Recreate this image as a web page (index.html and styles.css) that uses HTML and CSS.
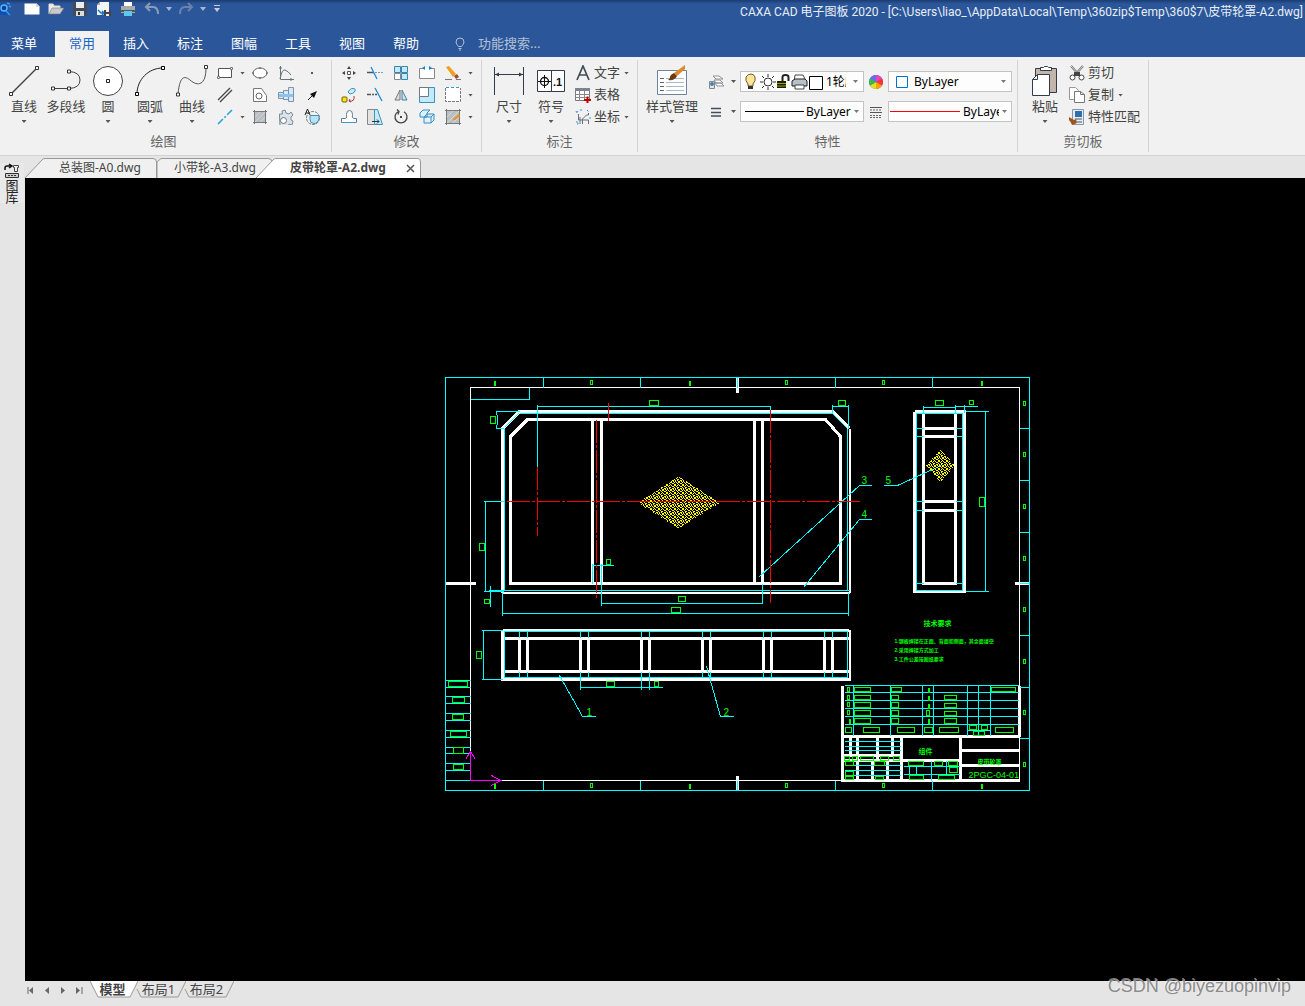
FILE: index.html
```html
<!DOCTYPE html>
<html lang="zh-CN">
<head>
<meta charset="utf-8">
<title>CAXA CAD 电子图板 2020</title>
<link rel="stylesheet" href="styles.css">
</head>
<body>
<div class="app">
<header class="header">
  <div class="titlebar">
    <div class="quick">
      <svg class="logo" width="12" height="16" viewBox="0 0 12 16"><path d="M0 3q4-2 6 1t2 6l3 4-3-1q-4 2-8 0" fill="#0b4fb4"/><circle cx="4" cy="7" r="3" fill="#123f87" stroke="#55b4ff" stroke-width="1.5"/><path d="M7 2l3 1M9 5l2 1M6 10l4 4" stroke="#2d9bff" stroke-width="1.5"/></svg>
      <button aria-label="新建"><svg width="16" height="16" viewBox="0 0 16 16"><path d="M.5 2.5h12l3 3v8H.5z" fill="#fff"/><path d="M12 2v4h4" fill="#cfd6e2"/></svg></button>
      <button aria-label="打开"><svg width="16" height="16" viewBox="0 0 16 16"><path d="M1 13V3h4l1 2h6v3" fill="#eee" stroke="#ddd"/><path d="M1 13l3-6h12l-4 6z" fill="#c9c9c9" stroke="#777" stroke-width=".6"/></svg></button>
      <button aria-label="保存"><svg width="16" height="16" viewBox="0 0 16 16"><path d="M1 1h14v14H3l-2-2z" fill="#444b55"/><path d="M4 1h8v6H4z" fill="#e9edf2"/><path d="M4 10h8v5H4z" fill="#ddd"/><path d="M6 11h2v3H6z" fill="#333"/></svg></button>
      <button aria-label="另存为"><svg width="16" height="16" viewBox="0 0 16 16"><path d="M4 1h9v13H1V4z" fill="#f4f4f4"/><path d="M4 1v3H1" fill="#aaa"/><path d="M2 9l3 3h3M6 10l2 2-2 2" fill="none" stroke="#1979ca" stroke-width="1.5"/><path d="M8 9h7v6H8z" fill="#444"/><path d="M10 9h3v2h-3zM10 13h3v2h-3z" fill="#eee"/></svg></button>
      <button aria-label="打印"><svg width="16" height="16" viewBox="0 0 16 16"><path d="M4 1h8v5H4z" fill="#fff"/><path d="M1 5h14v7H1z" fill="#a9a9a9"/><path d="M1 9h14v2H1z" fill="#555"/><path d="M4 10h8v5H4z" fill="#5cc8f0"/></svg></button>
      <button aria-label="撤销"><svg width="16" height="16" viewBox="0 0 16 16"><path d="M6 2L2 6l4 4M2 6h7q5 0 5 7" fill="none" stroke="#8a9bb8" stroke-width="2"/></svg></button>
      <button aria-label="撤销列表" class="arrow-btn"><svg width="6" height="4" viewBox="0 0 6 4"><path d="M0 0h6L3 4z" fill="#a9b6cd"/></svg></button>
      <button aria-label="重做"><svg width="16" height="16" viewBox="0 0 16 16"><path d="M10 2l4 4-4 4M14 6H7q-5 0-5 7" fill="none" stroke="#6a82ab" stroke-width="2"/></svg></button>
      <button aria-label="重做列表" class="arrow-btn"><svg width="6" height="4" viewBox="0 0 6 4"><path d="M0 0h6L3 4z" fill="#a9b6cd"/></svg></button>
      <button aria-label="自定义工具栏" class="arrow-btn"><svg width="6" height="8" viewBox="0 0 6 8"><path d="M0 0h6v1H0zM0 3h6L3 7z" fill="#c4cddd"/></svg></button>
    </div>
    <h1>CAXA CAD 电子图板 2020 - [C:\Users\liao_\AppData\Local\Temp\360zip$Temp\360$7\皮带轮罩-A2.dwg]</h1>
  </div>
  <nav class="menu">
    <button class="file">菜单</button>
    <button class="active">常用</button>
    <button>插入</button>
    <button>标注</button>
    <button>图幅</button>
    <button>工具</button>
    <button>视图</button>
    <button>帮助</button>
    <label class="search"><svg width="10" height="14" viewBox="0 0 10 14"><path d="M3.500 9.500Q1 7 1 5a4 4 0 0 1 8 0q0 2-2.500 4.500zM3.500 11.500h3M4 13h2" fill="none" stroke="#b4c0d5"/></svg><input type="text" placeholder="功能搜索..." aria-label="功能搜索"></label>
  </nav>
</header>

<section class="ribbon">
  <div class="group draw">
    <div class="tools">
      <button class="big"><svg width="32" height="32" viewBox="0 0 32 32"><path d="M3 29L29 3" stroke="#444" stroke-width="1.500"/><path d="M1.500 27.500h3v3h-3zM27.500 1.500h3v3h-3z" fill="#fff" stroke="#333"/></svg><span>直线</span><i class="caret"></i></button>
      <button class="big"><svg width="32" height="32" viewBox="0 0 32 32"><path d="M2 23.500h17Q30 23 30 15T19 6.500" fill="none" stroke="#444"/><path d="M1.500 22h3v3h-3zM17.500 22h3v3h-3zM17.500 5h3v3h-3z" fill="#fff" stroke="#333"/></svg><span>多段线</span></button>
      <button class="big"><svg width="32" height="32" viewBox="0 0 32 32"><circle cx="16" cy="16" r="14.500" fill="#fff" stroke="#444"/><path d="M14.500 14.500h3v3h-3z" fill="#fff" stroke="#222"/></svg><span>圆</span><i class="caret"></i></button>
      <button class="big"><svg width="32" height="32" viewBox="0 0 32 32"><path d="M3 29C3 15 14 3 29 3" fill="none" stroke="#222"/><path d="M1.500 27.500h3v3h-3zM27.500 1.500h3v3h-3z" fill="#fff" stroke="#000"/></svg><span>圆弧</span><i class="caret"></i></button>
      <button class="big"><svg width="32" height="32" viewBox="0 0 32 32"><path d="M2 29C4 8 10 12 14 15C22 22 30 20 30 3" fill="none" stroke="#555"/><path d="M.500 28h3v3h-3zM28.500 .500h3v3h-3z" fill="#fff" stroke="#333"/></svg><span>曲线</span><i class="caret"></i></button>
      <div class="small-grid">
        <button class="split" aria-label="矩形"><svg width="16" height="16" viewBox="0 0 16 16"><path d="M1.500 3.500h13v9h-13z" fill="#fff" stroke="#555"/><path d="M.500 11.500h2v2h-2zM13.500 2.500h2v2h-2z" fill="#fff" stroke="#777"/></svg><i class="caret"></i></button>
        <button aria-label="椭圆"><svg width="16" height="16" viewBox="0 0 16 16"><ellipse cx="8" cy="8" rx="7" ry="5" fill="#fff" stroke="#666"/><path d="M0 8h2M14 8h2M8 2v2M8 12v2" stroke="#555"/></svg></button>
        <button aria-label="公式曲线"><svg width="16" height="16" viewBox="0 0 16 16"><path d="M2.500 1v13.500H16M2 14Q4 4 7 5t6 5M1 3h3M13 13v3" fill="none" stroke="#68727d"/></svg></button>
        <button aria-label="点"><svg width="16" height="16" viewBox="0 0 16 16"><path d="M7 7h2v2H7z" fill="#555"/></svg></button>
        <button class="split" aria-label="平行线"><svg width="16" height="16" viewBox="0 0 16 16"><path d="M1 13L13 1M3 15L15 3" stroke="#444" stroke-width="1.300"/></svg></button>
        <button aria-label="孔"><svg width="16" height="16" viewBox="0 0 16 16"><path d="M1.500 1.500h8l5 7v6h-13z" fill="#fff" stroke="#777"/><circle cx="7" cy="9" r="3" fill="#fff" stroke="#666"/></svg></button>
        <button aria-label="轴"><svg width="16" height="16" viewBox="0 0 16 16"><path d="M.500 5.500h5v6h-5zM5.500 3.500h5v9h-5zM10.500 .500h5v14h-5z" fill="#d9e9f7" stroke="#7b93ab"/><path d="M1 7h14v3H1z" fill="#8cc1ec"/></svg></button>
        <button aria-label="箭头"><svg width="16" height="16" viewBox="0 0 16 16"><path d="M4 13l6-6" stroke="#222"/><path d="M13 4l-7 3 4 4z" fill="#111"/></svg></button>
        <button class="split" aria-label="中心线"><svg width="16" height="16" viewBox="0 0 16 16"><path d="M1 15L15 1" stroke="#1ba4e6" stroke-width="1.500" stroke-dasharray="7 2 2 2"/></svg><i class="caret"></i></button>
        <button aria-label="填充"><svg width="16" height="16" viewBox="0 0 16 16"><path d="M3 3h10v10H3z" fill="#b9bec2"/><path d="M3 8l5-5M3 13L13 3M8 13l5-5" stroke="#d3d3d3"/><path d="M1 2.500h14M1 13.500h14M2.500 1v14M13.500 1v14" stroke="#70777d"/></svg></button>
        <button aria-label="齿轮"><svg width="16" height="16" viewBox="0 0 16 16"><path d="M1.500 8V5h3L4 2l3-1 1 3 3 1 2-2 2 3-2 2v3l2 1-1 4-3-1-1 2H2z" fill="#dae3ea" stroke="#7b8b99"/><circle cx="5.500" cy="11.500" r="3" fill="#fff" stroke="#687682"/></svg></button>
        <button aria-label="局部放大"><svg width="16" height="16" viewBox="0 0 16 16"><circle cx="9" cy="9" r="6.500" fill="none" stroke="#777" stroke-dasharray="3 1"/><path d="M6 6.500h9v3q-1 5-5 5-4 0-4-4z" fill="#b5e4fa" stroke="#4a8fae"/><path d="M1 6L3.500 0 6 6M2 4h3" fill="none" stroke="#222"/></svg></button>
      </div>
    </div>
    <h2>绘图</h2>
  </div>

  <div class="group modify">
    <div class="tools">
      <div class="small-grid">
        <button aria-label="平移"><svg width="16" height="16" viewBox="0 0 16 16"><path d="M6.500 6.500h3v3h-3z" fill="#fff" stroke="#555"/><path d="M8 1l2 3H6zM8 15l2-3H6zM1 8l3-2v4zM15 8l-3-2v4z" fill="#444"/></svg></button>
        <button aria-label="裁剪"><svg width="16" height="16" viewBox="0 0 16 16"><path d="M0 7.500h7" stroke="#555" stroke-width="1.500"/><path d="M4 2l6 12" stroke="#168bd3" stroke-width="1.300"/><path d="M8 7.500h8" stroke="#6f9fc8" stroke-dasharray="2 1"/></svg></button>
        <button aria-label="阵列"><svg width="16" height="16" viewBox="0 0 16 16"><path d="M1.500 1.500h6v6h-6zM8.500 1.500h6v6h-6zM8.500 8.500h6v6h-6z" fill="#bfeaff" stroke="#3e83aa"/><path d="M1.500 8.500h6v6h-6z" fill="#fff" stroke="#888"/></svg></button>
        <button aria-label="拉伸"><svg width="16" height="16" viewBox="0 0 16 16"><path d="M5 3.500H.500v10h15v-10H11" fill="#fff" stroke="#888"/><path d="M3 3l3-2v4zM13 3l-3-2v4z" fill="#1684cf"/></svg></button>
        <button class="split" aria-label="删除"><svg width="16" height="16" viewBox="0 0 16 16"><path d="M1 2l3-1 7 8-3 3z" fill="#f0a01c"/><path d="M9 11l3-2 2 3-3 2z" fill="#a34b32"/><path d="M0 14.500h7M11 14.500h5" stroke="#777"/></svg><i class="caret"></i></button>
        <button aria-label="复制选择"><svg width="16" height="16" viewBox="0 0 16 16"><rect x="1" y="10" width="5" height="5" rx="1" fill="#ffe500" stroke="#6a6500"/><path d="M7 5q3-5 7-3 1 4-5 5z" fill="#c9edff" stroke="#3f91bd"/><path d="M8 14q6 1 5-5M9 12l-1 2 2 1" fill="none" stroke="#a33"/></svg></button>
        <button aria-label="延伸"><svg width="16" height="16" viewBox="0 0 16 16"><path d="M0 7.500h10" stroke="#555" stroke-width="1.500" stroke-dasharray="4 1 2 1"/><path d="M8 1l7 13" stroke="#168bd3" stroke-width="1.300"/></svg></button>
        <button aria-label="镜像"><svg width="16" height="16" viewBox="0 0 16 16"><path d="M7 3v10H2z" fill="#ddd" stroke="#777"/><path d="M9 3v10h5z" fill="#bce9ff" stroke="#527b92"/></svg></button>
        <button aria-label="缩放"><svg width="16" height="16" viewBox="0 0 16 16"><path d="M.500 .500h15v15H.500z" fill="#bfeaff" stroke="#3e91bd"/><path d="M.500 .500h9v9h-9z" fill="#fff" stroke="#777"/></svg></button>
        <button class="split" aria-label="打断"><svg width="16" height="16" viewBox="0 0 16 16"><path d="M.500 .500h15v14H.500z" fill="#fff"/><path d="M.500 1v13.500h15V1" fill="none" stroke="#777" stroke-dasharray="3 1"/><path d="M1 .500h14" stroke="#299bd5" stroke-dasharray="3 2"/></svg><i class="caret"></i></button>
        <button aria-label="等距线"><svg width="16" height="16" viewBox="0 0 16 16"><path d="M.500 9.500h4q2-1 1-4 0-4 3-4t3 4q-1 3 1 4h3v4H.500z" fill="#fff" stroke="#657b8a"/><path d="M1 13.500h14" stroke="#3c9ad0"/></svg></button>
        <button aria-label="拔模"><svg width="16" height="16" viewBox="0 0 16 16"><path d="M.500 .500h7v15h-7z" fill="#e3e3e3" stroke="#888"/><path d="M7.500 .500h3l5 15h-8z" fill="#bfeaff" stroke="#4492b4"/><path d="M5 12.500h7M10 10.500l2 2-2 2" fill="none" stroke="#333"/></svg></button>
        <button aria-label="旋转"><svg width="16" height="16" viewBox="0 0 16 16"><path d="M5 2.700A6 6 0 1 0 11 2.700M4 .500l2 2-1 3" fill="none" stroke="#444" stroke-width="1.300"/><path d="M7 7h2v2H7z" fill="#444"/></svg></button>
        <button aria-label="分解"><svg width="16" height="16" viewBox="0 0 16 16"><path d="M1 4l3-3h7l-3 3v4H1zM5 8l3-3h7v6l-3 3H5zM12 14V8H5M12 8l3-3" fill="#d7f1ff" stroke="#3a8ec0"/></svg></button>
        <button class="split" aria-label="编辑填充"><svg width="16" height="16" viewBox="0 0 16 16"><path d="M2 2h12v12H2z" fill="#b9bec2"/><path d="M2 8l6-6M2 14L14 2M8 14l6-6" stroke="#d8d8d8"/><path d="M0 1.500h16M0 14.500h16M1.500 0v16M14.500 0v16" stroke="#777"/><path d="M8 11l1-2 5-4 1 2-5 4z" fill="#e7961a"/></svg><i class="caret"></i></button>
      </div>
    </div>
    <h2>修改</h2>
  </div>

  <div class="group notes">
    <div class="tools">
      <button class="big"><svg width="32" height="32" viewBox="0 0 32 32"><path d="M1.500 2v28M30.500 2v28M2 9.500h28" stroke="#333c48"/><path d="M2 9.500l4-2v4zM30 9.500l-4-2v4z" fill="#333c48"/></svg><span>尺寸</span><i class="caret"></i></button>
      <button class="big"><svg width="32" height="32" viewBox="0 0 32 32"><path d="M2.500 5.500h27v21h-27zM16.500 5v22" fill="#fff" stroke="#333c48"/><circle cx="9.500" cy="16.500" r="4" fill="none" stroke="#111" stroke-width="1.300"/><path d="M3 16.500h13M9.500 10v13" stroke="#111"/><text x="18" y="21" class="glyph">.1</text></svg><span>符号</span><i class="caret"></i></button>
      <div class="list">
        <button><svg width="16" height="16" viewBox="0 0 16 16"><path d="M2 15L8 1l6 14M4 10h8" fill="none" stroke="#444c57" stroke-width="1.700"/></svg><span>文字</span><i class="caret"></i></button>
        <button><svg width="16" height="16" viewBox="0 0 16 16"><path d="M.500 2.500h14v11H.500z" fill="#fff" stroke="#777"/><path d="M0 1h15v3H0z" fill="#7b8490"/><path d="M0 7.500h15M0 10.500h15M4.500 4v10M9.500 4v10" stroke="#888"/><path d="M9 13h7M12.500 9.500v7" stroke="#b00" stroke-width="2"/></svg><span>表格</span></button>
        <button><svg width="16" height="16" viewBox="0 0 16 16"><path d="M3.500 5v6h10v4M7.500 15v-5l4-4h2V4M5 15V8" fill="none" stroke="#64707d"/><path d="M1 2l1 2 1-2M5 1h2M12 1l2 2M1 13h2v2H1M14 9h2" stroke="#3794d7" fill="none" stroke-dasharray="2 1"/></svg><span>坐标</span><i class="caret"></i></button>
      </div>
    </div>
    <h2>标注</h2>
  </div>

  <div class="group props">
    <div class="tools">
      <button class="big wide"><svg width="32" height="32" viewBox="0 0 32 32"><path d="M1.500 5.500h29v24h-29z" fill="#fff" stroke="#6f849c"/><path d="M4 13.500h4M4 17.500h4M4 21.500h4M4 25.500h4" stroke="#54677c"/><path d="M10 13.500h18M10 17.500h18M10 21.500h18M10 25.500h18" stroke="#aab7c4"/><path d="M29 0v4l-8 7-3-3z" fill="#dc8a2c"/><path d="M18 8l3 3q-2 5-9 4 2-1 2-3t4-4z" fill="#6c3c16"/></svg><span>样式管理</span><i class="caret"></i></button>
      <div class="prop-grid">
        <button class="split" aria-label="图层"><svg width="16" height="16" viewBox="0 0 16 16"><path d="M5 2h6l4 3H8zM6 6h6l3 3H8zM7 9h6l3 3H9z" fill="#fff" stroke="#8a929b"/><path d="M1.500 7.500h5v7h-5z" fill="#dce8f5" stroke="#888"/><circle cx="4" cy="10" r="2" fill="#4a7ebb"/></svg><i class="caret"></i></button>
        <div class="combo layer">
          <svg width="78" height="18" viewBox="0 0 78 18"><path d="M3 11Q0 8 1 4q2-3 5-3t4 3q1 4-2 7v2H3z" fill="#ffe59a" stroke="#685b32"/><path d="M3 13h5v3H3z" fill="#333"/><circle cx="23" cy="9" r="4" fill="#fff" stroke="#333"/><path d="M23 1v3M23 14v3M15 9h3M28 9h3M17 3l2 2M27 13l2 2M29 3l-2 2M19 13l-2 2" stroke="#333"/><path d="M32 8h9v7h-9z" fill="#1d1d00"/><path d="M32 10.500h9M32 13h9" stroke="#9ca500"/><path d="M37.500 8V4q0-2 3-2t3 2v4" fill="none" stroke="#222" stroke-width="2"/><path d="M50 2h8l2 4v3H49z" fill="#fff" stroke="#444"/><path d="M47 8l3-2h10l2 2v5H47z" fill="#b9c0c6" stroke="#222"/><path d="M50 12h9v4h-9z" fill="#fff" stroke="#444"/><path d="M64.500 3.500h13v13h-13z" fill="#fff" stroke="#000"/></svg>
          <select aria-label="当前图层"><option>1轮廓实线层</option></select><i class="caret"></i>
        </div>
        <svg class="mid" width="14" height="14" viewBox="0 0 14 14"><circle cx="7" cy="7" r="7" fill="#3779e5"/><path d="M7 7V0a7 7 0 0 1 6 3.500z" fill="#e943b8"/><path d="M7 7l6-3.500a7 7 0 0 1 0 7z" fill="#f33"/><path d="M7 7l6 3.500a7 7 0 0 1-6 3.500z" fill="#f8a000"/><path d="M7 7v7a7 7 0 0 1-6-3.500z" fill="#e8df1b"/><path d="M7 7l-6 3.500a7 7 0 0 1 0-7z" fill="#35bb42"/><path d="M7 7L1 3.500A7 7 0 0 1 7 0z" fill="#6e68ed"/></svg>
        <div class="combo color"><svg width="12" height="12" viewBox="0 0 12 12"><path d="M.500 .500h11v11H.500z" fill="#fff" stroke="#0073cf"/></svg><select aria-label="颜色"><option>ByLayer</option></select><i class="caret"></i></div>
        <button class="split" aria-label="线型"><svg width="16" height="16" viewBox="0 0 16 16"><path d="M3 4.500h10M3 8.500h10M3 12h10" stroke="#444d59" stroke-width="1.300"/></svg><i class="caret"></i></button>
        <div class="combo line"><hr><select aria-label="线型样式"><option>ByLayer</option></select><i class="caret"></i></div>
        <svg class="mid" width="14" height="14" viewBox="0 0 14 14"><path d="M1 2.500h12M1 7.500h12" stroke="#555"/><path d="M1 5h12M1 10.500h12M1 12.500h12" stroke="#666" stroke-dasharray="2 1"/></svg>
        <div class="combo line red"><hr><select aria-label="线宽样式"><option>ByLayer</option></select><i class="caret"></i></div>
      </div>
    </div>
    <h2>特性</h2>
  </div>

  <div class="group clip">
    <div class="tools">
      <button class="big"><svg width="32" height="32" viewBox="0 0 32 32"><path d="M6.500 3.500h21v24h-21z" fill="#c2b5ab" stroke="#333c48"/><path d="M11.500 2.500h3l1-1h3l1 1h3v3h-11z" fill="#fff" stroke="#333c48"/><path d="M8.500 9.500h12v21h-17v-16z" fill="#fff" stroke="#333c48"/><path d="M8.500 9.500v5h-5" fill="none" stroke="#333c48"/></svg><span>粘贴</span><i class="caret"></i></button>
      <div class="list">
        <button><svg width="16" height="16" viewBox="0 0 16 16"><path d="M2 1l9 10M14 1L5 11" stroke="#666" stroke-width="2"/><path d="M2 1l8 9M14 1L6 10" stroke="#ddd"/><circle cx="3.500" cy="12.500" r="2.500" fill="#fff" stroke="#444"/><circle cx="12.500" cy="12.500" r="2.500" fill="#fff" stroke="#444"/><path d="M5 7h6v4H5z" fill="#444"/></svg><span>剪切</span></button>
        <button><svg width="16" height="16" viewBox="0 0 16 16"><path d="M.500 .500h6l3 3v9h-9z" fill="#fff" stroke="#999"/><path d="M5.500 4.500h6l4 3v8h-10z" fill="#fff" stroke="#777"/><path d="M11.500 4.500v3h4" fill="none" stroke="#777"/></svg><span>复制</span><i class="caret"></i></button>
        <button><svg width="16" height="16" viewBox="0 0 16 16"><path d="M3.500 .500h11v15h-11z" fill="#e6edf4" stroke="#8496aa"/><path d="M6 2h7v6H6z" fill="#2f6fae"/><path d="M6 10h7M8 13h5" stroke="#555"/><path d="M0 8l5 3 2-1 1 4-5 2q-1-3-3-5z" fill="#9d531a"/></svg><span>特性匹配</span></button>
      </div>
    </div>
    <h2>剪切板</h2>
  </div>
</section>

<main class="workspace">
  <aside class="dock"><button aria-label="图库"><svg width="16" height="16" viewBox="0 0 16 16"><path d="M1 7V5q0-2 2-2h4M5 1l3 2-3 2" fill="none" stroke="#111" stroke-width="1.500"/><path d="M9.500 2.500h5v2h-1v4h-3v-4h-1z" fill="#eee" stroke="#444"/><path d="M1.500 10.500h13v4h-13z" fill="#ccc" stroke="#333"/><path d="M4 12.500h8" stroke="#333" stroke-dasharray="2 1"/></svg><span>图库</span></button></aside>
  <div class="stage">
    <nav class="filetabs">
      <button class="t1"><svg width="132" height="20" viewBox="0 0 132 20"><path d="M0 20L17 2Q18 .500 20 .500H128Q131.500 .500 131.500 4V20" fill="#f0f0f0" stroke="#999"/></svg><span>总装图-A0.dwg</span></button>
      <button class="t2"><svg width="116" height="20" viewBox="0 0 116 20"><path d="M0 20V4L4 .500H111Q115 .500 115 4V20" fill="#f0f0f0" stroke="#999"/></svg><span>小带轮-A3.dwg</span></button>
      <button class="t3"><svg width="166" height="20" viewBox="0 0 166 20"><path d="M0 20L17 2Q18 .500 20 .500H162Q164.500 .500 164.500 4V20" fill="#fff" stroke="#999"/></svg><span>皮带轮罩-A2.dwg</span><svg class="x" width="9" height="9" viewBox="0 0 9 9"><path d="M1 1l7 7M8 1L1 8" stroke="#555" stroke-width="1.500"/></svg></button>
    </nav>
    <div class="canvas">
      <svg class="drawing" width="586" height="415" viewBox="444.500 376.500 586 415" role="img" aria-label="皮带轮罩图纸">
        <defs><pattern id="hatch" width="8" height="8" patternUnits="userSpaceOnUse" x=".5" y=".5"><path d="M0 0h1v1H0zM2 0h1v1H2zM5 0h2v1H5zM1 1h1v1H1zM3 1h1v1H3zM5 1h2v1H5zM0 2h1v1H0zM4 2h1v1H4zM7 2h1v1H7zM1 3h2v1H1zM5 3h1v1H5zM1 4h2v1H1zM4 4h1v1H4zM6 4h1v1H6zM0 5h1v1H0zM3 5h1v1H3zM7 5h1v1H7zM1 6h1v1H1zM4 6h2v1H4zM0 7h1v1H0zM2 7h1v1H2zM4 7h1v1H4zM7 7h1v1H7z" fill="#ff0"/></pattern></defs>
        <g fill="none" shape-rendering="crispEdges">
          <path stroke="#fff" d="M470 780V387H1019V780H470"/>
          <path stroke="#fff" stroke-width="3" d="M737 377V392M737 775V790M445 583H475M1014 583H1029M502 592V428L519 411H832L849 428M510 584V436L527 419H825L840 436V583H510M592 419V583M601 419V583M754 419V583M762 419V583M502 630H848M502 679H848M502 629V680M504 638H848M504 671H848M519 638V671M527 638V671M580 638V671M588 638V671M641 638V671M649 638V671M702 638V671M710 638V671M763 638V671M771 638V671M824 638V671M832 638V671M914 411V592M914 411H965M964 411V591M914 591H965M923 411V583H955V411M923 428H955M923 436H955M923 501H955M923 510H955M842 685V781M1019 685V736M842 736H1019M842 780H1019M901 736V780M960 736V780M960 750H1019M960 765H1019M901 760H960M850 736V755M857 736V780M877 736V760M892 736V755M842 755H902M842 760H902M872 760V780M887 760V780"/>
          <path stroke="#fff" stroke-width="2" d="M849 428V592M849 629V680M502 592H849"/>
          <path stroke="#0ff" d="M445 377H1029V790H445zM543 377V387M640 377V387M737 377V387M835 377V387M932 377V387M543 780V790M640 780V790M737 780V790M835 780V790M932 780V790M445 780H470M1019 428H1029M1019 480H1029M1019 532H1029M1019 583H1029M1019 635H1029M1019 687H1029M1019 738H1029M470 399H529V387M519 413H832M504 428V590M847 428V590M488 590H849M504 427L518 413M832 413L847 428M537 404V466M537 406H770V409M832 404V412M848 404V428M832 406H848M495 411H519M495 428H503M496 411V414L497 415V424L496 425V428M483 501H503M485 501V591M483 591H503M490 585V606M592 563V583M601 563V605M592 565H613M601 603H762V583M502 592V615M848 592V615M502 613L504 613H848M759 576L859 485H871M803 587L859 519H871M504 631H847V677H504zM481 630H502M481 679H502M483 630V679M519 631V637M519 671V677M527 631V637M527 671V677M580 631V637M580 671V689M588 631V637M588 671V677M641 631V637M641 671V689M649 631V637M649 671V689M702 631V637M702 671V677M710 631V637M710 671V677M763 631V637M763 671V677M771 631V637M771 671V677M824 631V637M824 671V677M832 631V637M832 671V677M580 687H662M559 675L582 716H595M706 666L720 716H733M916 413H962V590H916zM916 428H923M955 428H962M916 436H923M955 436H962M916 501H923M955 501H962M916 510H923M955 510H962M916 583H923M955 583H962M923 412V405M923 407H955M955 412V404M964 412V404M955 406H977M965 411H988M985 411V591M965 591H988M941 465L897 485H883"/>
          <path stroke="#0ff" d="M445 680H470M445 687H470M445 696H470M445 703H470M445 713H470M445 720H470M445 730H470M445 737H470M445 747H470M445 753H470M445 763H470M445 770H470M844 685H1018M844 692H1018M844 700H1018M844 708H1018M844 716H1018M844 724H1018M853 685V735M890 685V735M922 685V735M933 685V735M967 685V735M978 685V735M990 685V735M967 730H990M844 741H900M844 746H900M844 750H900M844 765H900M844 770H900M844 775H900M903 766H959M903 774H959M931 760V780M909 766V774M916 766V774M946 760V774"/>
          <path fill="url(#hatch)" d="M637 502L678 476L720 502L678 528zM926 465L940 448L954 465L940 482z"/>
          <path stroke="#f00" stroke-dasharray="23 2 3 2" d="M506 501H861M596 419V599M770 409V602M537 466V535"/>
          <path stroke="#f00" d="M608 402V420"/>
          <path stroke="#0f0" d="M590 380h2v4h-2zM785 380h2v4h-2zM882 380h2v4h-2zM590 783h2v4h-2zM785 783h2v4h-2zM882 783h2v4h-2zM1023 401h2v4h-2zM1023 452h2v4h-2zM1023 504h2v4h-2zM1023 556h2v4h-2zM1023 607h2v4h-2zM1023 659h2v4h-2zM1023 710h2v4h-2zM1023 762h2v4h-2zM649 400h9v5h-9zM838 400h7v5h-7zM490 416h5v7h-5zM479 543h5v7h-5zM606 559h4v5h-4zM678 596h7v5h-7zM671 607h9v5h-9zM484 599h5v4h-5zM476 651h5v7h-5zM606 681h8v5h-8zM654 681h4v5h-4zM935 400h8v5h-8zM969 400h4v4h-4zM979 497h5v9h-5zM448 681h19v5h-19zM452 697h12v5h-12zM452 714h11v5h-11zM450 731h16v5h-16zM453 747h10v6h-10zM453 764h10v5h-10z"/>
          <path stroke="#0f0" d="M847 687h2v4h-2zM847 695h2v4h-2zM847 702h2v4h-2zM847 710h2v4h-2zM854 687h16v4h-16zM854 695h16v4h-16zM854 702h16v5h-16zM854 710h16v5h-16zM854 718h16v5h-16zM891 687h10v4h-10zM891 695h7v4h-7zM891 702h7v5h-7zM891 710h7v5h-7zM891 718h7v5h-7zM926 710h3v5h-3zM944 695h12v4h-12zM944 703h12v4h-12zM944 711h12v4h-12zM944 718h12v5h-12zM991 687h24v4h-24zM845 727h6v5h-6zM863 727h16v5h-16zM897 727h17v5h-17zM924 727h8v5h-8zM939 727h19v5h-19zM995 727h18v5h-18zM969 725h7v4h-7zM981 725h6v4h-6zM973 731h11v4h-11zM844 756h5v4h-5zM852 756h5v4h-5zM860 756h13v4h-13zM880 756h8v4h-8zM893 756h6v4h-6zM845 761h8v4h-8zM874 761h10v4h-10zM845 771h8v4h-8zM845 776h8v3h-8zM875 776h8v3h-8zM908 761h15v4h-15zM934 761h8v4h-8zM948 761h9v4h-9zM949 767h8v5h-8zM909 775h14v4h-14zM938 775h16v4h-16z"/>
          <path stroke="#0f0" stroke-width="2" d="M494 380v5M689 380v5M981 380v5M494 783v5M689 783v5M981 783v5M849 718v5M928 687v5M928 695v5M928 703v5M928 718v5"/>
          <path stroke="#f0f" d="M470 751V780H500M465 759L470 751L475 759M491 775L500 780L491 785"/>
        </g>
        <g class="cadtext" fill="#0f0">
          <text x="861" y="483">3</text><text x="861" y="517">4</text><text x="885" y="483">5</text><text x="586" y="715">1</text><text x="723" y="715">2</text>
          <text x="923" y="625" class="head">技术要求</text>
          <text x="894" y="642" class="note">1.钢板焊接在正面、背面和侧面，其余面镂空</text>
          <text x="894" y="651" class="note">2.采用焊接方式加工</text>
          <text x="894" y="660" class="note">3.工件公差按图纸要求</text>
          <text x="918" y="753" class="head">组件</text>
          <text x="977" y="763" class="part">皮带轮罩</text>
          <text x="968" y="777" class="code">2PGC-04-01</text>
        </g>
      </svg>
    </div>
    <footer class="layouts">
      <div class="pager">
        <button aria-label="第一页"><svg width="8" height="7" viewBox="0 0 8 7"><path d="M1 0v7" stroke="#666"/><path d="M6 0v7L2 3.500z" fill="#666"/></svg></button>
        <button aria-label="上一页"><svg width="8" height="7" viewBox="0 0 8 7"><path d="M6 0v7L2 3.500z" fill="#666"/></svg></button>
        <button aria-label="下一页"><svg width="8" height="7" viewBox="0 0 8 7"><path d="M2 0v7l4-3.500z" fill="#666"/></svg></button>
        <button aria-label="末页"><svg width="8" height="7" viewBox="0 0 8 7"><path d="M7 0v7" stroke="#666"/><path d="M1 0v7l4-3.500z" fill="#666"/></svg></button>
      </div>
      <button class="sheet on"><svg width="48" height="17" viewBox="0 0 48 17"><path d="M0 0l8 16h32l8-16z" fill="#fff"/><path d="M0 0l8 16h32l8-16" fill="none" stroke="#999"/></svg><span>模型</span></button>
      <button class="sheet"><svg width="52" height="17" viewBox="0 0 52 17"><path d="M3 8l4 8h37l8-16" fill="none" stroke="#999"/></svg><span>布局1</span></button>
      <button class="sheet"><svg width="52" height="17" viewBox="0 0 52 17"><path d="M3 8l4 8h37l8-16" fill="none" stroke="#999"/></svg><span>布局2</span></button>
    </footer>
  </div>
</main>
<div class="watermark">CSDN @biyezuopinvip</div>
</div>
</body>
</html>
```
FILE: styles.css
```css
* { box-sizing: border-box; }
body {
  margin: 0;
  font: 13px/18px "Noto Sans", "Noto Sans CJK SC", sans-serif;
  color: #444;
  background: #e5e5e5;
}
button {
  display: flex;
  align-items: center;
  justify-content: center;
  padding: 0;
  border: 0;
  background: none;
  color: inherit;
  font: inherit;
  white-space: nowrap;
}
svg { display: block; flex: none; }
h1, h2 { margin: 0; font-weight: 400; }
.app { position: relative; display: flex; flex-direction: column; min-height: 100vh; }

.header { background: #2b579a; color: #fff; }
.titlebar {
  display: flex;
  justify-content: space-between;
  height: 31px;
  padding-right: 2px;
  background: linear-gradient(#1c3c70, #2b579a 4px);
}
.titlebar h1 { padding-top: 3px; font: 12px/18px Roboto, "Noto Sans CJK SC", sans-serif; white-space: nowrap; color: #e9eef6; }
.quick { display: flex; align-items: center; gap: 8px; height: 18px; }
.quick .logo { margin-right: 4px; }
.quick .arrow-btn { width: 6px; margin: 0 -2px; }
.quick .arrow-btn + .arrow-btn { margin-left: 2px; }
.menu { display: flex; height: 26px; }
.menu button { width: 54px; height: 26px; padding-bottom: 3px; }
.menu .file { width: 48px; margin-right: 7px; }
.menu .active { background: #f1f1f1; color: #1a66c4; }
.search { display: flex; align-items: center; gap: 13px; margin-left: 22px; }
.search input { width: 120px; padding: 0 0 3px; border: 0; background: none; font: inherit; color: #fff; }
.search input::placeholder { color: #b4c0d5; opacity: 1; }

.ribbon { display: flex; height: 99px; padding: 3px 0; background: #f1f1f1; border-bottom: 1px solid #d2d2d2; }
.group { display: flex; flex-direction: column; height: 92px; border-right: 1px solid #d4d4d4; }
.draw { width: 332px; }
.modify { width: 150px; }
.notes { width: 156px; }
.props { width: 380px; }
.clip { width: 131px; }
.group h2 { padding-top: 4px; padding-right: 4px; font-size: 13px; line-height: 18px; text-align: center; color: #666; }
.group.modify h2, .group.notes h2, .group.props h2, .group.clip h2 { padding-right: 0; }
.tools { display: flex; height: 68px; padding-top: 2px; padding-left: 6px; }
.draw .tools { padding-left: 3px; }
.modify .tools { padding-left: 4px; }
.caret { flex: none; width: 5px; height: 3px; background: #555; clip-path: polygon(0 0, 100% 0, 50% 100%); }
.big { flex-direction: column; justify-content: flex-start; width: 42px; padding-top: 3px; }
.big span { line-height: 18px; }
.big .caret { margin-top: 5px; }
.big.wide { width: 56px; }
.glyph { font: bold 11px "Liberation Sans", sans-serif; fill: #111; }
.small-grid { display: grid; grid-template-columns: 32px 26px 26px 26px; grid-auto-rows: 22px; }
.draw .small-grid { padding-left: 2px; }
.modify .small-grid { grid-template-columns: 26px 26px 26px 26px 36px; }
.split { justify-content: flex-start; gap: 7px; padding-left: 2px; }
.modify .split { padding-left: 5px; }
.list { display: grid; grid-auto-rows: 22px; padding-left: 3px; }
.list button { justify-content: flex-start; gap: 4px; }
.list svg { margin-right: -1px; }
.list span { padding-bottom: 2px; }
.prop-grid {
  display: grid;
  grid-template-columns: 32px 124px 24px 124px;
  grid-template-rows: 21px 21px;
  row-gap: 9px;
  padding-top: 9px;
  padding-left: 8px;
}
.prop-grid .split { padding-left: 0; }
.mid { place-self: center; }
.combo { display: flex; align-items: center; gap: 3px; padding: 0 5px 0 4px; border: 1px solid #c3c3c3; background: #fdfdfd; color: #000; font-size: 12px; }
.combo select { flex: 1; min-width: 0; width: 0; margin: 0; padding: 0; border: 0; background: none; color: #000; font: inherit; appearance: none; text-overflow: clip; }
.combo .caret { margin-left: 4px; background: #777; }
.combo.layer select { flex: none; width: 20px; }
.combo.color { gap: 6px; padding-left: 7px; }
.combo hr { width: 59px; height: 1px; margin: 0; border: 0; background: #000; }
.combo.line { gap: 2px; padding-right: 4px; }
.combo.line .caret { margin-left: 0; }
.combo.red { gap: 3px; padding-left: 1px; }
.combo.red hr { width: 70px; background: #f00; }

.workspace { display: flex; flex: 1; }
.dock { width: 25px; padding-top: 7px; }
.dock button { flex-direction: column; width: 24px; background: #e9e9e9; }
.dock span { width: 13px; line-height: 12px; white-space: normal; color: #222; }
.stage { display: flex; flex: 1; flex-direction: column; min-width: 0; }
.filetabs { display: flex; height: 22px; padding-top: 2px; }
.filetabs button { display: grid; height: 20px; font-size: 12px; line-height: 18px; }
.filetabs button > * { grid-area: 1 / 1; }
.filetabs span { z-index: 1; align-self: center; justify-self: start; margin-left: 34px; }
.filetabs .t2 span { margin-left: 17px; }
.filetabs .t3 { z-index: 1; margin-left: -17px; font-weight: 700; }
.filetabs .x { align-self: center; justify-self: end; margin-right: 7px; }
.canvas { position: relative; flex: 1; background: #000; overflow: hidden; }
.drawing { position: absolute; left: 420px; top: 199px; }
.cadtext { font: 10px "Liberation Sans", "Noto Sans CJK SC", sans-serif; }
.cadtext .head { font-size: 7px; font-weight: 700; }
.cadtext .note { font-size: 5px; font-weight: 700; }
.cadtext .part { font-size: 6px; font-weight: 700; }
.cadtext .code { font-size: 9px; }
.layouts { display: flex; height: 25px; }
.pager { display: flex; gap: 8px; height: 19px; padding: 0 7px 0 2px; }
.pager button { width: 8px; }
.sheet { display: grid; height: 17px; line-height: 13px; }
.sheet > * { grid-area: 1 / 1; }
.sheet span { padding-right: 3px; }
.sheet + .sheet { margin-left: -4px; }
.sheet.on { font-weight: 700; }
.watermark { position: absolute; right: 14px; bottom: 8px; font: 18px/24px "Liberation Sans", sans-serif; color: #8c8c8c; text-shadow: -1px -1px 0 rgba(255, 255, 255, .5); }
```
